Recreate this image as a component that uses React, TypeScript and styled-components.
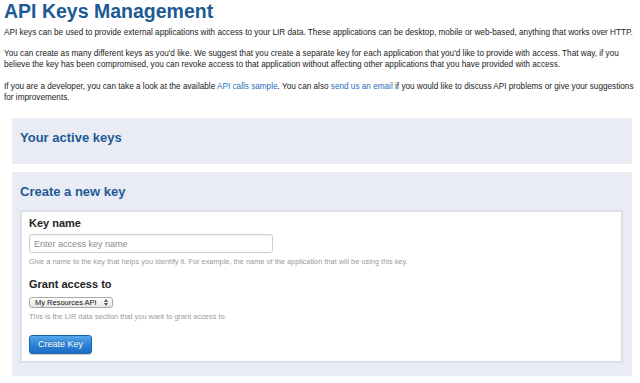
import styled, { createGlobalStyle } from 'styled-components';

const GlobalStyle = createGlobalStyle`
  html, body {
    margin: 0;
    padding: 0;
    background: #ffffff;
  }
  body {
    font-family: "Liberation Sans", Arial, Helvetica, sans-serif;
    color: #222222;
  }
`;

const Page = styled.div`
  width: 632px;
  padding: 0 4px;
`;

const Title = styled.h1`
  margin: 0;
  font-size: 19.5px;
  line-height: 22px;
  font-weight: bold;
  color: #1d5a94;
`;

const Intro = styled.p`
  margin: 0 0 10.5px;
  font-size: 8.2px;
  line-height: 11px;
  color: #222222;
  white-space: nowrap;

  &:first-of-type {
    margin-top: 4.5px;
  }

  a {
    color: #2a6ec0;
    text-decoration: none;
  }
`;

const Panel = styled.section<{ $first?: boolean }>`
  margin: ${(p) => (p.$first ? '15.5px' : '0')} 0 8px 8px;
  width: 620px;
  box-sizing: border-box;
  background: #e9ecf4;
  padding: 12px 9px ${(p) => (p.$first ? '18px' : '13px')} 8px;
`;

const PanelTitle = styled.h2`
  margin: 0;
  font-size: 13px;
  line-height: 16px;
  font-weight: bold;
  color: #1d5a94;
`;

const FormBox = styled.div`
  margin-top: 10px;
  background: #ffffff;
  border: 2px solid #dde0e6;
  padding: 4px 7px 7px;
`;

const Label = styled.label<{ $gap: number; $top?: number }>`
  display: block;
  font-size: 11px;
  line-height: 14px;
  font-weight: bold;
  color: #222222;
  margin-top: ${(p) => p.$top ?? 0}px;
  margin-bottom: ${(p) => p.$gap}px;
`;

const TextInput = styled.input`
  display: block;
  box-sizing: border-box;
  width: 244px;
  height: 19px;
  padding: 0 4px;
  border: 1px solid #cfcfcf;
  border-radius: 3px;
  font-family: inherit;
  font-size: 9px;
  color: #333333;
  box-shadow: inset 0 1px 1px rgba(0, 0, 0, 0.05);
  outline: none;

  &::placeholder {
    color: #8a8a8a;
  }
`;

const Hint = styled.div`
  margin-top: 4px;
  font-size: 7.4px;
  line-height: 10px;
  color: #9a9a9a;
`;

const Select = styled.div`
  display: flex;
  align-items: center;
  justify-content: space-between;
  box-sizing: border-box;
  width: 84px;
  height: 11px;
  padding: 0 4px 0 5px;
  border: 1px solid #a9a9a9;
  border-radius: 3px;
  background: linear-gradient(#ffffff, #e6e6e6);
  font-size: 7.5px;
  color: #111111;
`;

const Button = styled.button`
  display: block;
  margin-top: 12.5px;
  width: 63px;
  height: 19px;
  padding: 0;
  border: 1px solid #1c62b0;
  border-radius: 3px;
  background: linear-gradient(#56a6ec, #2a7fd6 55%, #1f6cc4);
  color: #ffffff;
  font-family: inherit;
  font-size: 9px;
  text-shadow: 0 -1px 0 rgba(0, 0, 0, 0.25);
  box-shadow: 0 1px 1px rgba(0, 0, 0, 0.2);
`;

function UpDown() {
  return (
    <svg width="4" height="7" viewBox="0 0 4 7">
      <path d="M0 3 L2 0 L4 3 Z M0 4 L2 7 L4 4 Z" fill="#555555" />
    </svg>
  );
}

export default function App() {
  return (
    <>
      <GlobalStyle />
      <Page>
        <Title>API Keys Management</Title>
        <Intro>
          API keys can be used to provide external applications with access to your LIR data. These
          applications can be desktop, mobile or web-based, anything that works over HTTP.
        </Intro>
        <Intro>
          You can create as many different keys as you'd like. We suggest that you create a separate key
          for each application that you'd like to provide with access. That way, if you
          <br />
          believe the key has been compromised, you can revoke access to that application without
          affecting other applications that you have provided with access.
        </Intro>
        <Intro>
          If you are a developer, you can take a look at the available <a href="#">API calls sample</a>.
          You can also <a href="#">send us an email</a> if you would like to discuss API problems or give
          your suggestions
          <br />
          for improvements.
        </Intro>

        <Panel $first>
          <PanelTitle>Your active keys</PanelTitle>
        </Panel>

        <Panel>
          <PanelTitle>Create a new key</PanelTitle>
          <FormBox>
            <Label $gap={4}>Key name</Label>
            <TextInput placeholder="Enter access key name" />
            <Hint>
              Give a name to the key that helps you identify it. For example, the name of the application
              that will be using this key.
            </Hint>

            <Label $gap={6} $top={10}>
              Grant access to
            </Label>
            <Select>
              <span>My Resources API</span>
              <UpDown />
            </Select>
            <Hint>This is the LIR data section that you want to grant access to.</Hint>

            <Button>Create Key</Button>
          </FormBox>
        </Panel>
      </Page>
    </>
  );
}
